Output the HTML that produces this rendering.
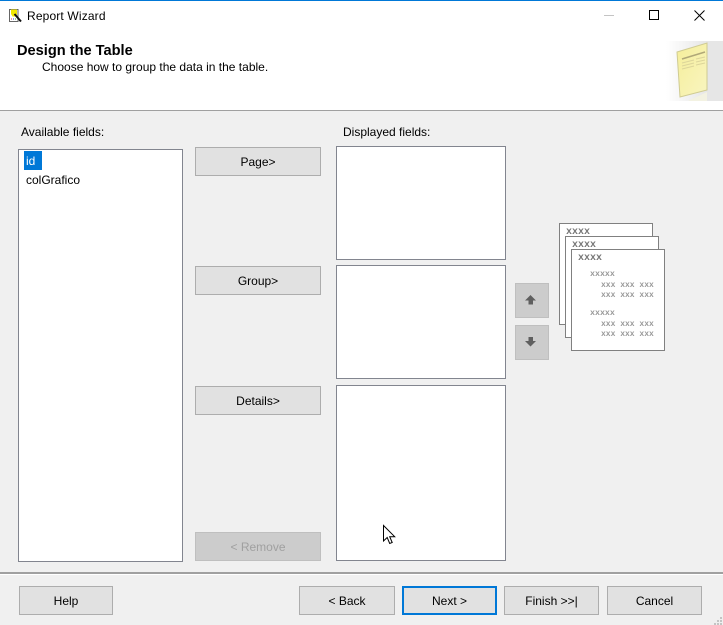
<!DOCTYPE html>
<html><head><meta charset="utf-8">
<style>
html,body{margin:0;padding:0}
body{width:723px;height:625px;position:relative;overflow:hidden;background:#f0f0f0;font:12px "Liberation Sans",sans-serif;color:#000}
.a{position:absolute;box-sizing:border-box}
.t{position:absolute;white-space:nowrap;line-height:16px}
.b{position:absolute;box-sizing:border-box;background:#e1e1e1;border:1px solid #adadad;text-align:center;font-size:12px;white-space:nowrap}
.l{position:absolute;box-sizing:border-box;background:#fff;border:1px solid #82858f}
.m{position:absolute;font:8px "Liberation Mono",monospace;color:#707070;white-space:nowrap;line-height:10px}
.h{font:bold 10px "Liberation Mono",monospace;color:#777}
</style></head><body>
<div class="a" style="left:0;top:0;width:723px;height:110px;background:#fff"></div>
<div class="a" style="left:0;top:0;width:723px;height:1px;background:#0078d7"></div>
<svg class="a" style="left:8px;top:8px" width="15" height="15" viewBox="0 0 15 15"><path d="M1.500 1.500h8.500v12H1.500z" fill="#fff" stroke="#666"/><path d="M3 1.500h6l0 5.500-1 1.500H4.500L3 6z" fill="#f2e800"/><path d="M6.500 6l6.500 7.500" stroke="#111" stroke-width="2"/><path d="M3 11h1" stroke="#d33"/><path d="M5 11h1" stroke="#33c"/><path d="M7 11h1" stroke="#3a3"/></svg>
<div class="t" style="left:27px;top:8px;letter-spacing:.15px">Report Wizard</div>
<div class="a" style="left:604px;top:15px;width:10px;height:1px;background:#c4c4c4"></div>
<div class="a" style="left:649px;top:10px;width:10px;height:10px;border:1px solid #000"></div>
<svg class="a" style="left:694px;top:10px" width="11" height="11" viewBox="0 0 11 11"><path d="M.5.5l10 10M10.500.5l-10 10" stroke="#000" fill="none"/></svg>
<div class="t" style="left:17px;top:43px;font-size:14.600px;font-weight:bold">Design the Table</div>
<div class="t" style="left:42px;top:59px">Choose how to group the data in the table.</div>
<svg class="a" style="left:666px;top:41px" width="57" height="60" viewBox="0 0 57 60">
<defs><linearGradient id="g" x1="0" x2="1"><stop offset="0" stop-color="#fff"/><stop offset="1" stop-color="#e6e6e6"/></linearGradient>
<linearGradient id="y" x1="0" y1="0" x2="1" y2="1"><stop offset="0" stop-color="#f5ee9a"/><stop offset="1" stop-color="#f9f5c0"/></linearGradient></defs>
<rect x="0" width="41" height="60" fill="url(#g)"/><rect x="41" width="16" height="60" fill="#e6e6e6"/>
<path d="M22 60l19-9v9z" fill="#f3f2e2"/>
<path d="M11 11L41 2V49L14 56z" fill="url(#y)" stroke="#cfcb92"/>
<path d="M16 18L39 11" stroke="#b0a878" stroke-width="1.500"/>
<path d="M16 22L28 19M16 25L28 22M16 28L28 25M30 18L39 16M30 21L39 19M30 24L39 22" stroke="#dcd59a"/></svg>
<div class="a" style="left:0;top:110px;width:723px;height:1px;background:#a0a0a0"></div>

<div class="t" style="left:21px;top:124px">Available fields:</div>
<div class="l" style="left:18px;top:149px;width:165px;height:413px"></div>
<div class="a" style="left:24px;top:151px;width:18px;height:19px;background:#0078d7"></div>
<div class="t" style="left:26px;top:153px;color:#fff">id</div>
<div class="t" style="left:26px;top:172px">colGrafico</div>

<div class="b" style="left:195px;top:147px;width:126px;height:29px;line-height:28px">Page&gt;</div>
<div class="b" style="left:195px;top:266px;width:126px;height:29px;line-height:28px">Group&gt;</div>
<div class="b" style="left:195px;top:386px;width:126px;height:29px;line-height:28px">Details&gt;</div>
<div class="b" style="left:195px;top:532px;width:126px;height:29px;line-height:28px;background:#cccccc;border-color:#bfbfbf;color:#a0a0a0">&lt; Remove</div>

<div class="t" style="left:343px;top:124px">Displayed fields:</div>
<div class="l" style="left:336px;top:146px;width:170px;height:114px"></div>
<div class="l" style="left:336px;top:265px;width:170px;height:114px"></div>
<div class="l" style="left:336px;top:385px;width:170px;height:176px"></div>
<svg class="a" style="left:382px;top:524px" width="14" height="21" viewBox="0 0 14 21"><path d="M1.500 1.500V17l3.700-3.500 2.500 6 2.500-1-2.500-5.800h5z" fill="#fff" stroke="#000"/></svg>

<div class="a" style="left:515px;top:283px;width:34px;height:35px;background:#cccccc;border:1px solid #bfbfbf"></div>
<div class="a" style="left:515px;top:325px;width:34px;height:35px;background:#cccccc;border:1px solid #bfbfbf"></div>
<svg class="a" style="left:525px;top:295px" width="12" height="10" viewBox="0 0 12 10"><path d="M5.500 0L11 5.500H8V9.500H3.500V5.500H0z" fill="#5f5f5f"/></svg>
<svg class="a" style="left:525px;top:337px" width="12" height="10" viewBox="0 0 12 10"><path d="M3.500 0H8V4H11L5.500 9.500 0 4H3.500z" fill="#5f5f5f"/></svg>

<div class="a" style="left:559px;top:223px;width:94px;height:102px;background:#fff;border:1px solid #808080"></div>
<div class="m h" style="left:566px;top:227px">xxxx</div>
<div class="a" style="left:565px;top:236px;width:94px;height:102px;background:#fff;border:1px solid #808080"></div>
<div class="m h" style="left:572px;top:240px">xxxx</div>
<div class="a" style="left:571px;top:249px;width:94px;height:102px;background:#fff;border:1px solid #808080"></div>
<div class="m h" style="left:578px;top:253px">xxxx</div>
<div class="m" style="left:590px;top:270px;font-size:8.300px;font-weight:bold;color:#999">xxxxx</div>
<div class="m" style="left:601px;top:281px;font-weight:bold;color:#999">xxx xxx xxx</div>
<div class="m" style="left:601px;top:291px;font-weight:bold;color:#999">xxx xxx xxx</div>
<div class="m" style="left:590px;top:309px;font-size:8.300px;font-weight:bold;color:#999">xxxxx</div>
<div class="m" style="left:601px;top:320px;font-weight:bold;color:#999">xxx xxx xxx</div>
<div class="m" style="left:601px;top:330px;font-weight:bold;color:#999">xxx xxx xxx</div>

<div class="a" style="left:0;top:572px;width:723px;height:2px;background:#a0a0a0"></div>
<div class="a" style="left:0;top:574px;width:723px;height:1px;background:#fff"></div>
<div class="b" style="left:19px;top:586px;width:94px;height:29px;line-height:28px">Help</div>
<div class="b" style="left:299px;top:586px;width:96px;height:29px;line-height:28px">&lt; Back</div>
<div class="b" style="left:402px;top:586px;width:95px;height:29px;line-height:26px;border:2px solid #0078d7">Next &gt;</div>
<div class="b" style="left:504px;top:586px;width:95px;height:29px;line-height:28px">Finish &gt;&gt;|</div>
<div class="b" style="left:607px;top:586px;width:95px;height:29px;line-height:28px">Cancel</div>
<svg class="a" style="left:713px;top:615px" width="10" height="10" viewBox="0 0 10 10"><path d="M7 2h2v2H7zM4 5h2v2H4zM7 5h2v2H7zM1 8h2v2H1zM4 8h2v2H4zM7 8h2v2H7z" fill="#c4c4c4"/></svg>
</body></html>
